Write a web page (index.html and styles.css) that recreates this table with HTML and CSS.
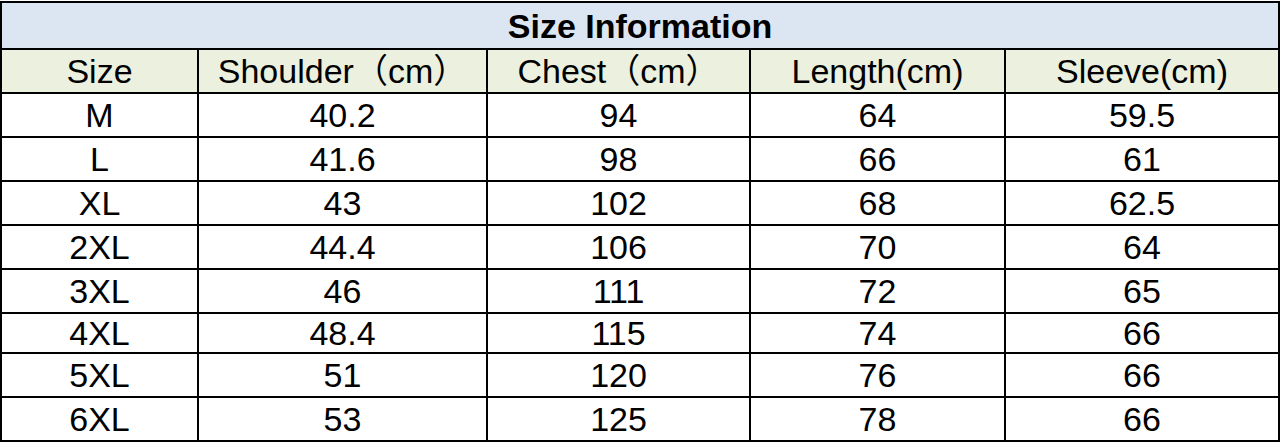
FILE: index.html
```html
<!DOCTYPE html>
<html>
<head>
<meta charset="utf-8">
<link rel="stylesheet" href="styles.css">
</head>
<body>
<table class="size-table">
  <colgroup>
    <col class="c1"><col class="c2"><col class="c3"><col class="c4"><col class="c5">
  </colgroup>
  <tr class="title-row"><th colspan="5">Size Information</th></tr>
  <tr class="head-row">
    <td>Size</td>
    <td>Shoulder（cm）</td>
    <td>Chest（cm）</td>
    <td>Length(cm)</td>
    <td>Sleeve(cm)</td>
  </tr>
  <tr><td>M</td><td>40.2</td><td>94</td><td>64</td><td>59.5</td></tr>
  <tr><td>L</td><td>41.6</td><td>98</td><td>66</td><td>61</td></tr>
  <tr><td>XL</td><td>43</td><td>102</td><td>68</td><td>62.5</td></tr>
  <tr><td>2XL</td><td>44.4</td><td>106</td><td>70</td><td>64</td></tr>
  <tr><td>3XL</td><td>46</td><td>111</td><td>72</td><td>65</td></tr>
  <tr class="short-row"><td>4XL</td><td>48.4</td><td>115</td><td>74</td><td>66</td></tr>
  <tr><td>5XL</td><td>51</td><td>120</td><td>76</td><td>66</td></tr>
  <tr><td>6XL</td><td>53</td><td>125</td><td>78</td><td>66</td></tr>
</table>
</body>
</html>
```
FILE: styles.css
```css
html, body {
  margin: 0;
  padding: 0;
  background: #ffffff;
}
body {
  padding: 1px 0 0 0;
  font-family: "Liberation Sans", Arial, "Noto Sans CJK SC", sans-serif;
  color: #000;
}
.size-table {
  table-layout: fixed;
  border-collapse: collapse;
  width: 1278px;
}
.c1 { width: 197px; }
.c2 { width: 289px; }
.c3 { width: 263px; }
.c4 { width: 255px; }
.c5 { width: 274px; }
.size-table th,
.size-table td {
  border: 2px solid #000;
  padding: 0;
  text-align: center;
  vertical-align: middle;
  height: 42px;
  font-size: 34px;
  font-weight: normal;
  line-height: 1;
  white-space: nowrap;
}
.title-row th {
  background: #dce6f2;
  height: 45px;
  font-weight: bold;
  font-size: 34px;
}
.head-row td {
  background: #ebf1de;
  font-size: 34px;
}
.short-row td {
  height: 38px;
}
```
